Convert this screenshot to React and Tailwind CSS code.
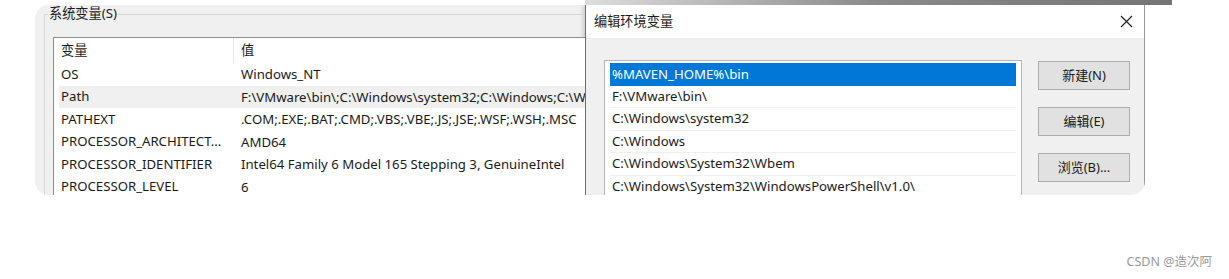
import React from 'react';

const sysVars = [
  { name: 'OS', value: 'Windows_NT' },
  { name: 'Path', value: 'F:\\VMware\\bin\\;C:\\Windows\\system32;C:\\Windows;C:\\W', selected: true },
  { name: 'PATHEXT', value: '.COM;.EXE;.BAT;.CMD;.VBS;.VBE;.JS;.JSE;.WSF;.WSH;.MSC' },
  { name: 'PROCESSOR_ARCHITECT...', value: 'AMD64' },
  { name: 'PROCESSOR_IDENTIFIER', value: 'Intel64 Family 6 Model 165 Stepping 3, GenuineIntel' },
  { name: 'PROCESSOR_LEVEL', value: '6' },
];

const pathItems = [
  '%MAVEN_HOME%\\bin',
  'F:\\VMware\\bin\\',
  'C:\\Windows\\system32',
  'C:\\Windows',
  'C:\\Windows\\System32\\Wbem',
  'C:\\Windows\\System32\\WindowsPowerShell\\v1.0\\',
];

const font = { fontFamily: '"Noto Sans", "Noto Sans CJK SC", sans-serif' };

export default function App() {
  return (
    <div className="w-[1229px] h-[279px] bg-white text-[#1a1a1a] text-[13.2px] leading-none" style={font}>
      {/* dark strip over the dialog */}
      <div className="h-[5px] ml-[585px] w-[587px] bg-gradient-to-r from-[#dedede] via-[#8a8a8a] to-[#747474]" />

      <div className="ml-[35px] w-[1110px] h-[190px] rounded-tl-[14px] rounded-b-[14px] overflow-hidden flex bg-[#f0f0f0]">
        {/* System variables panel */}
        <div className="w-[550px] h-full pl-[9px] pt-[9px] overflow-hidden shrink-0">
          <div className="relative h-full border-t border-l border-[#d5d5d5] pl-[8px] pt-[22px]">
            <span className="absolute -top-[8px] left-[3px] bg-[#f0f0f0] px-px">系统变量(S)</span>
            <div className="h-full w-[600px] bg-white border-t border-l border-[#8c8c8c]">
              {/* header */}
              <div className="flex h-[25px] items-center">
                <div className="w-[180px] shrink-0 pl-[7px] border-r border-[#e5e5e5] h-full flex items-center">变量</div>
                <div className="pl-[7px]">值</div>
              </div>
              {sysVars.map((v) => (
                <div
                  key={v.name}
                  className={`flex h-[22.5px] items-center ml-[5px] whitespace-nowrap ${v.selected ? 'bg-[#f0f0f0]' : ''}`}
                >
                  <div className="w-[182px] shrink-0 pl-[2px]">{v.name}</div>
                  <div className="max-w-[342px] leading-[20px]">{v.value}</div>
                </div>
              ))}
            </div>
          </div>
        </div>

        {/* Edit environment variable dialog */}
        <div className="w-[560px] h-full border-l border-r border-l-[#6e6e6e] border-r-[#9a9a9a] flex flex-col shadow-[-2px_0_4px_rgba(0,0,0,0.15)]">
          <div className="h-[33px] bg-white flex items-center justify-between pl-[8px] pr-[11px] shrink-0">
            <span>编辑环境变量</span>
            <svg width="13" height="13" viewBox="0 0 13 13" className="text-[#222]">
              <path d="M1 1 L12 12 M12 1 L1 12" stroke="currentColor" strokeWidth="1.2" />
            </svg>
          </div>
          <div className="flex-1 flex pt-[22px] pl-[18px] gap-[16px] overflow-hidden">
            <div className="w-[418px] shrink-0 h-full bg-white border-t border-l border-r border-[#b5b5b5] pt-[2px] px-[5px]">
              {pathItems.map((p, i) => (
                <div
                  key={p}
                  className={`h-[22.5px] flex items-center pl-[2px] whitespace-nowrap ${
                    i === 0 ? 'bg-[#0078d7] text-white' : 'border-b border-[#f0f0f0]'
                  }`}
                >
                  {p}
                </div>
              ))}
            </div>
            <div className="flex flex-col gap-[17px] pt-px">
              {['新建(N)', '编辑(E)', '浏览(B)...'].map((b) => (
                <button
                  key={b}
                  className="w-[92px] h-[29px] bg-[#e1e1e1] border border-[#adadad] text-[13px] text-[#1a1a1a]"
                >
                  {b}
                </button>
              ))}
            </div>
          </div>
        </div>
      </div>

      <div className="flex justify-end pr-[17px] mt-[61px]">
        <span className="text-[12.5px] text-[#9a9a9a]">CSDN @造次阿</span>
      </div>
    </div>
  );
}
